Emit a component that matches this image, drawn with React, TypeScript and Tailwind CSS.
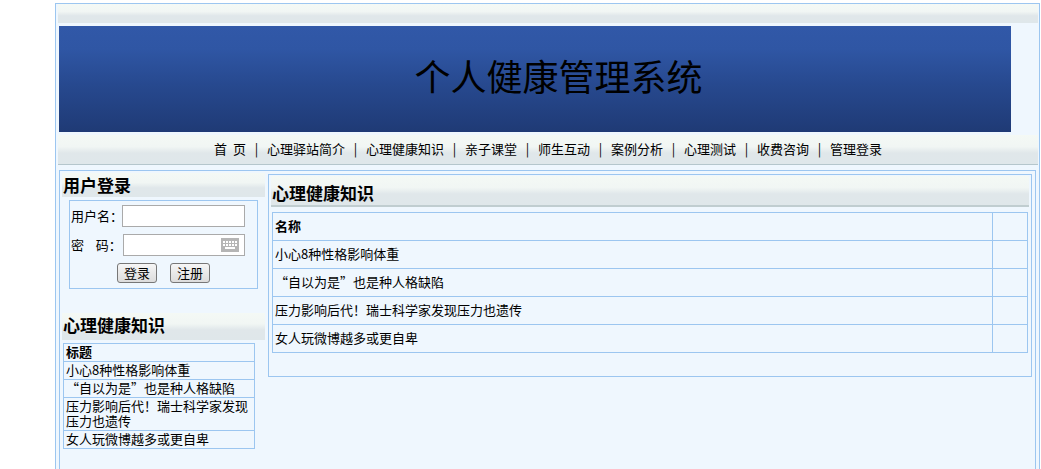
import React from 'react';

const FONT = "font-['Noto_Sans_CJK_SC','Liberation_Sans',sans-serif]";
const BAR = 'bg-[linear-gradient(to_bottom,#f4f9f5_0%,#f1f6f4_40%,#e0e7ea_62%,#dfe7ea_100%)]';

const navItems = ['首 页', '心理驿站简介', '心理健康知识', '亲子课堂', '师生互动', '案例分析', '心理测试', '收费咨询', '管理登录'];
const articles = ['小心8种性格影响体重', '“自以为是”也是种人格缺陷', '压力影响后代！瑞士科学家发现压力也遗传', '女人玩微博越多或更自卑'];

const KeyboardIcon = () => (
  <svg width="18" height="14" viewBox="0 0 18 14" className="absolute right-[5px] top-[3px]">
    <rect width="18" height="14" fill="#b5b5b5" />
    <g fill="#fff">
      <rect x="2" y="3" width="2" height="2" />
      <rect x="5" y="3" width="2" height="2" />
      <rect x="8" y="3" width="2" height="2" />
      <rect x="11" y="3" width="2" height="2" />
      <rect x="14" y="3" width="2" height="2" />
      <rect x="2" y="6" width="2" height="2" />
      <rect x="5" y="6" width="2" height="2" />
      <rect x="8" y="6" width="2" height="2" />
      <rect x="11" y="6" width="2" height="2" />
      <rect x="14" y="6" width="2" height="2" />
      <rect x="4" y="9" width="10" height="2" />
    </g>
  </svg>
);

const Button = ({ label }: { label: string }) => (
  <button className="h-5 w-10 rounded-[3px] border border-[#777] bg-[linear-gradient(to_bottom,#f6f6f6,#dcdcdc)] pb-[2px] text-[13px] leading-none text-black">
    {label}
  </button>
);

export default function App() {
  return (
    <div className={`h-[469px] w-[1041px] overflow-hidden bg-white pt-[3px] text-black ${FONT}`}>
      <div className="ml-[55px] h-[466px] w-[985px] border border-b-0 border-[#9cc6f0] bg-[#eff7fe] pl-[2px] pr-[1px]">
        <div className={`h-[19px] ${BAR}`} />

        <div className="ml-px mt-[3px] flex h-[106px] w-[952px] items-center justify-center bg-[linear-gradient(to_bottom,#3158a8_0%,#2f56a4_22%,#27498f_55%,#1f3a75_100%)] pb-[9px] pl-[47px]">
          <h1 className="text-[36px] font-normal leading-none text-black">个人健康管理系统</h1>
        </div>

        <nav className={`mt-[3px] flex h-[30px] items-center justify-center border-b border-[#b5c6cc] pb-[2px] text-[13px] leading-none ${BAR}`}>
          {navItems.map((item, i) => (
            <React.Fragment key={item}>
              {i > 0 && <span className="mx-[8.8px] w-[3.4px] text-center">|</span>}
              <span className={i === 0 ? 'whitespace-pre' : ''}>{i === 0 ? '首  页' : item}</span>
            </React.Fragment>
          ))}
        </nav>

        <div className="ml-px mr-[2px] mt-[5px] flex h-[300px] border border-b-0 border-[#9cc6f0] pl-[2px]">
          <aside className="w-[203px] shrink-0 pt-[2px]">
            <h2 className={`flex h-6 items-center pb-[2px] pl-px text-[17px] font-bold leading-none ${BAR}`}>用户登录</h2>
            <div className="ml-[7px] mt-[3px] h-[89px] w-[189px] border border-[#9cc6f0] pl-px pt-1 text-[13px] leading-none">
              <div className="flex h-[22px] items-center">
                <span className="w-[51px] shrink-0 whitespace-nowrap pb-[2px]">用户名：</span>
                <input className="h-[22px] w-[123px] border border-[#aaa] bg-white" />
              </div>
              <div className="mt-[7px] flex h-[22px] items-center">
                <span className="w-[52px] shrink-0 whitespace-pre pb-[2px]">密    码：</span>
                <div className="relative h-[22px] w-[122px] border border-[#aaa] bg-white">
                  <KeyboardIcon />
                </div>
              </div>
              <div className="mt-[7px] flex gap-[13px] pl-[46px]">
                <Button label="登录" />
                <Button label="注册" />
              </div>
            </div>

            <h2 className={`mt-6 flex h-[27px] items-center pb-[4px] pl-px text-[17px] font-bold leading-none ${BAR}`}>心理健康知识</h2>
            <table className="ml-px mt-[3px] w-[192px] border-collapse text-[13px] leading-[15px]">
              <tbody>
                <tr className="h-[18px]">
                  <th className="border border-[#9cc6f0] px-[2px] pb-[2px] text-left font-bold">标题</th>
                </tr>
                {articles.map((a) => (
                  <tr key={a} className="h-[18px]">
                    <td className="border border-[#9cc6f0] px-[2px] pb-[2px]">{a}</td>
                  </tr>
                ))}
              </tbody>
            </table>
          </aside>

          <main className="ml-[3px] mt-[3px] h-[203px] w-[764px] border border-[#9cc6f0] px-[2px] pt-px">
            <h2 className={`flex h-[31px] items-center border-b-2 border-[#c0cdd0] pl-px pt-[3px] text-[17px] font-bold leading-none ${BAR}`}>心理健康知识</h2>
            <table className="ml-px mt-[5px] w-[756px] border-collapse text-[13px] leading-none">
              <tbody>
                <tr className="h-7">
                  <th className="border border-[#9cc6f0] px-[2px] pb-[2px] text-left font-bold">名称</th>
                  <td className="w-[35px] border border-[#9cc6f0]" />
                </tr>
                {articles.map((a) => (
                  <tr key={a} className="h-7">
                    <td className="border border-[#9cc6f0] px-[2px] pb-[2px]">{a}</td>
                    <td className="border border-[#9cc6f0]" />
                  </tr>
                ))}
              </tbody>
            </table>
          </main>
        </div>
      </div>
    </div>
  );
}
